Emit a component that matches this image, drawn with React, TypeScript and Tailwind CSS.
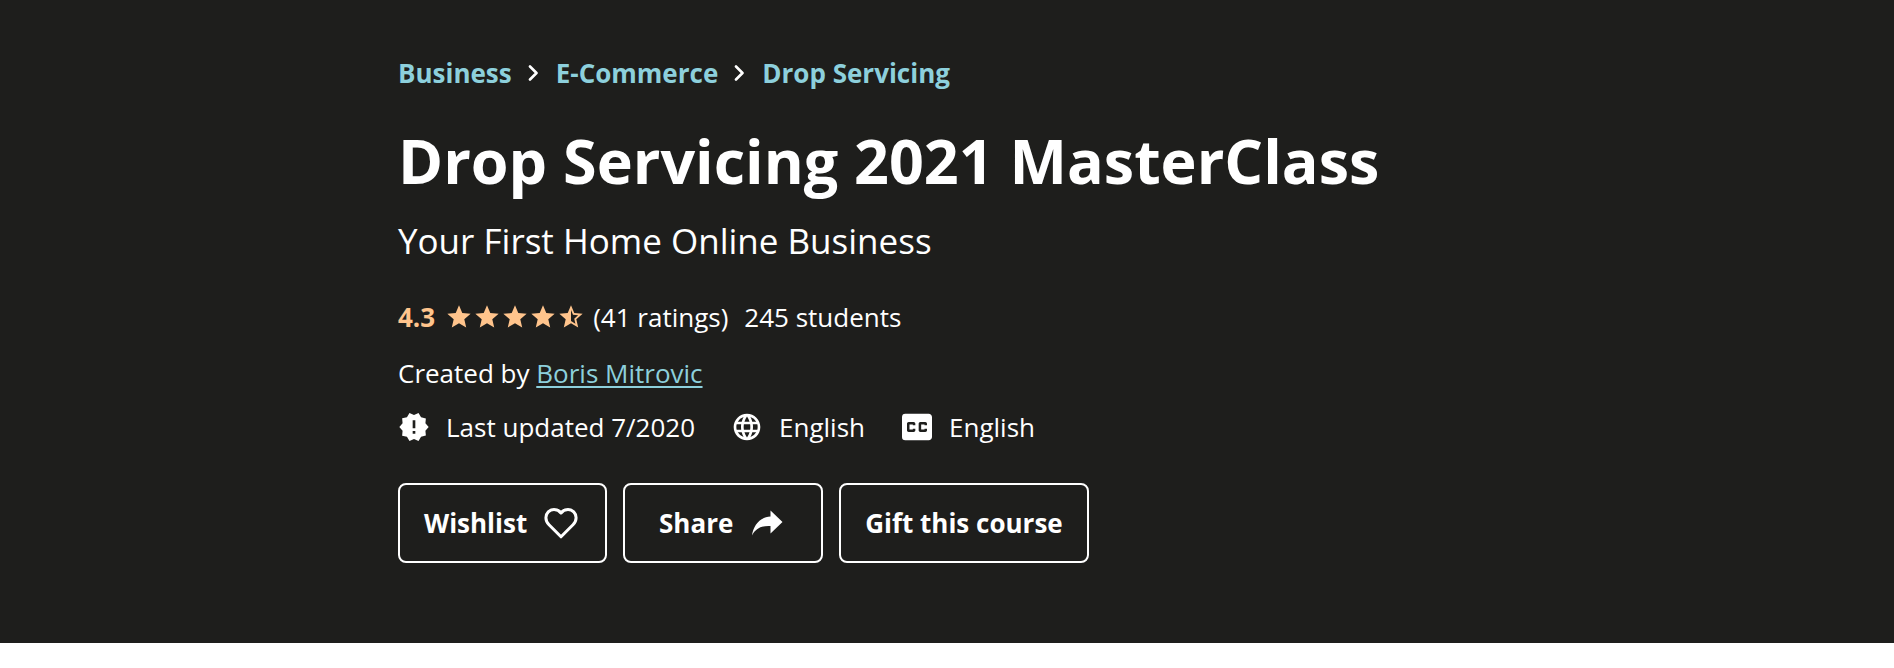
import type { ReactNode } from "react";
import {
  MdClosedCaption,
  MdLanguage,
  MdNewReleases,
  MdStar,
  MdStarHalf,
} from "react-icons/md";

const breadcrumbs = ["Business", "E-Commerce", "Drop Servicing"];

function Chevron() {
  return (
    <svg viewBox="0 0 12 16" className="mx-4 h-4 w-3" fill="none" aria-hidden="true">
      <path
        d="M2 1.5 8.500 8 2 14.500"
        stroke="white"
        strokeWidth="2.6"
        strokeLinecap="round"
        strokeLinejoin="round"
      />
    </svg>
  );
}

function HeartIcon() {
  return (
    <svg viewBox="0 0 40 40" className="size-10" fill="none" aria-hidden="true">
      <path
        d="M20 33.800 8 21.800C5.800 19.600 4.900 17.600 4.900 14.800 4.900 10 8.500 6.500 13 6.500c2.800 0 5.400 1.300 7 3.500C21.600 7.800 24.200 6.500 27 6.500c4.500 0 8.100 3.500 8.100 8.300 0 2.800-.9 4.800-3.100 7z"
        stroke="white"
        strokeWidth="3"
        strokeLinejoin="round"
      />
    </svg>
  );
}

function ShareIcon() {
  return (
    <svg viewBox="0 0 40 40" className="size-10" fill="currentColor" aria-hidden="true">
      <path d="M5 32.500C6.500 22 13 14 23.500 13.500V7.500L35.500 19 23.500 30.500V23C15 22.500 9 25 5 32.500z" />
    </svg>
  );
}

function Meta({ icon, children }: { icon: ReactNode; children: ReactNode }) {
  return (
    <div className="flex h-9 items-center gap-4">
      <span className="flex w-8 justify-center">{icon}</span>
      <span>{children}</span>
    </div>
  );
}

const buttonClass =
  "flex h-20 min-w-[200px] items-center justify-center gap-3.5 rounded-lg border-2 border-white px-6 font-bold";

export default function App() {
  return (
    <div className="min-h-screen bg-white font-['Open_Sans',sans-serif]">
      <header className="bg-[#1e1e1c] px-6 pt-[55px] pb-20 text-[26px] leading-9 text-white">
        <div className="mx-auto max-w-[1098px]">
          <nav aria-label="Breadcrumb">
            <ol className="flex items-center font-bold text-[#8dd0dc]">
              {breadcrumbs.map((crumb, index) => (
                <li key={crumb} className="flex items-center">
                  {index > 0 && <Chevron />}
                  <a href="#">{crumb}</a>
                </li>
              ))}
            </ol>
          </nav>

          <h1 className="mt-8 text-[61px] leading-[76px] font-bold">
            Drop Servicing 2021 MasterClass
          </h1>
          <p className="mt-4 text-[35px] leading-[52px]">
            Your First Home Online Business
          </p>

          <div className="mt-8 flex items-center">
            <span className="mr-2.5 font-bold text-[#ffc48c]">4.3</span>
            <span
              className="mr-2 flex text-[28px] text-[#ffc48c]"
              role="img"
              aria-label="Rating: 4.3 out of 5"
            >
              <MdStar />
              <MdStar />
              <MdStar />
              <MdStar />
              <MdStarHalf />
            </span>
            <span className="mr-4">(41 ratings)</span>
            <span>245 students</span>
          </div>

          <p className="mt-5">
            Created by{" "}
            <a href="#" className="text-[#8dd0dc] underline decoration-2 underline-offset-3">
              Boris Mitrovic
            </a>
          </p>

          <div className="mt-[18px] flex items-center gap-9">
            <Meta icon={<MdNewReleases className="size-8 shrink-0" />}>
              Last updated 7/2020
            </Meta>
            <Meta icon={<MdLanguage className="size-8 shrink-0" />}>English</Meta>
            <Meta icon={<MdClosedCaption className="size-10 shrink-0" />}>
              English
            </Meta>
          </div>

          <div className="mt-[38px] flex gap-4">
            <button type="button" className={buttonClass}>
              Wishlist
              <HeartIcon />
            </button>
            <button type="button" className={buttonClass}>
              Share
              <ShareIcon />
            </button>
            <button type="button" className={buttonClass}>
              Gift this course
            </button>
          </div>
        </div>
      </header>
    </div>
  );
}
